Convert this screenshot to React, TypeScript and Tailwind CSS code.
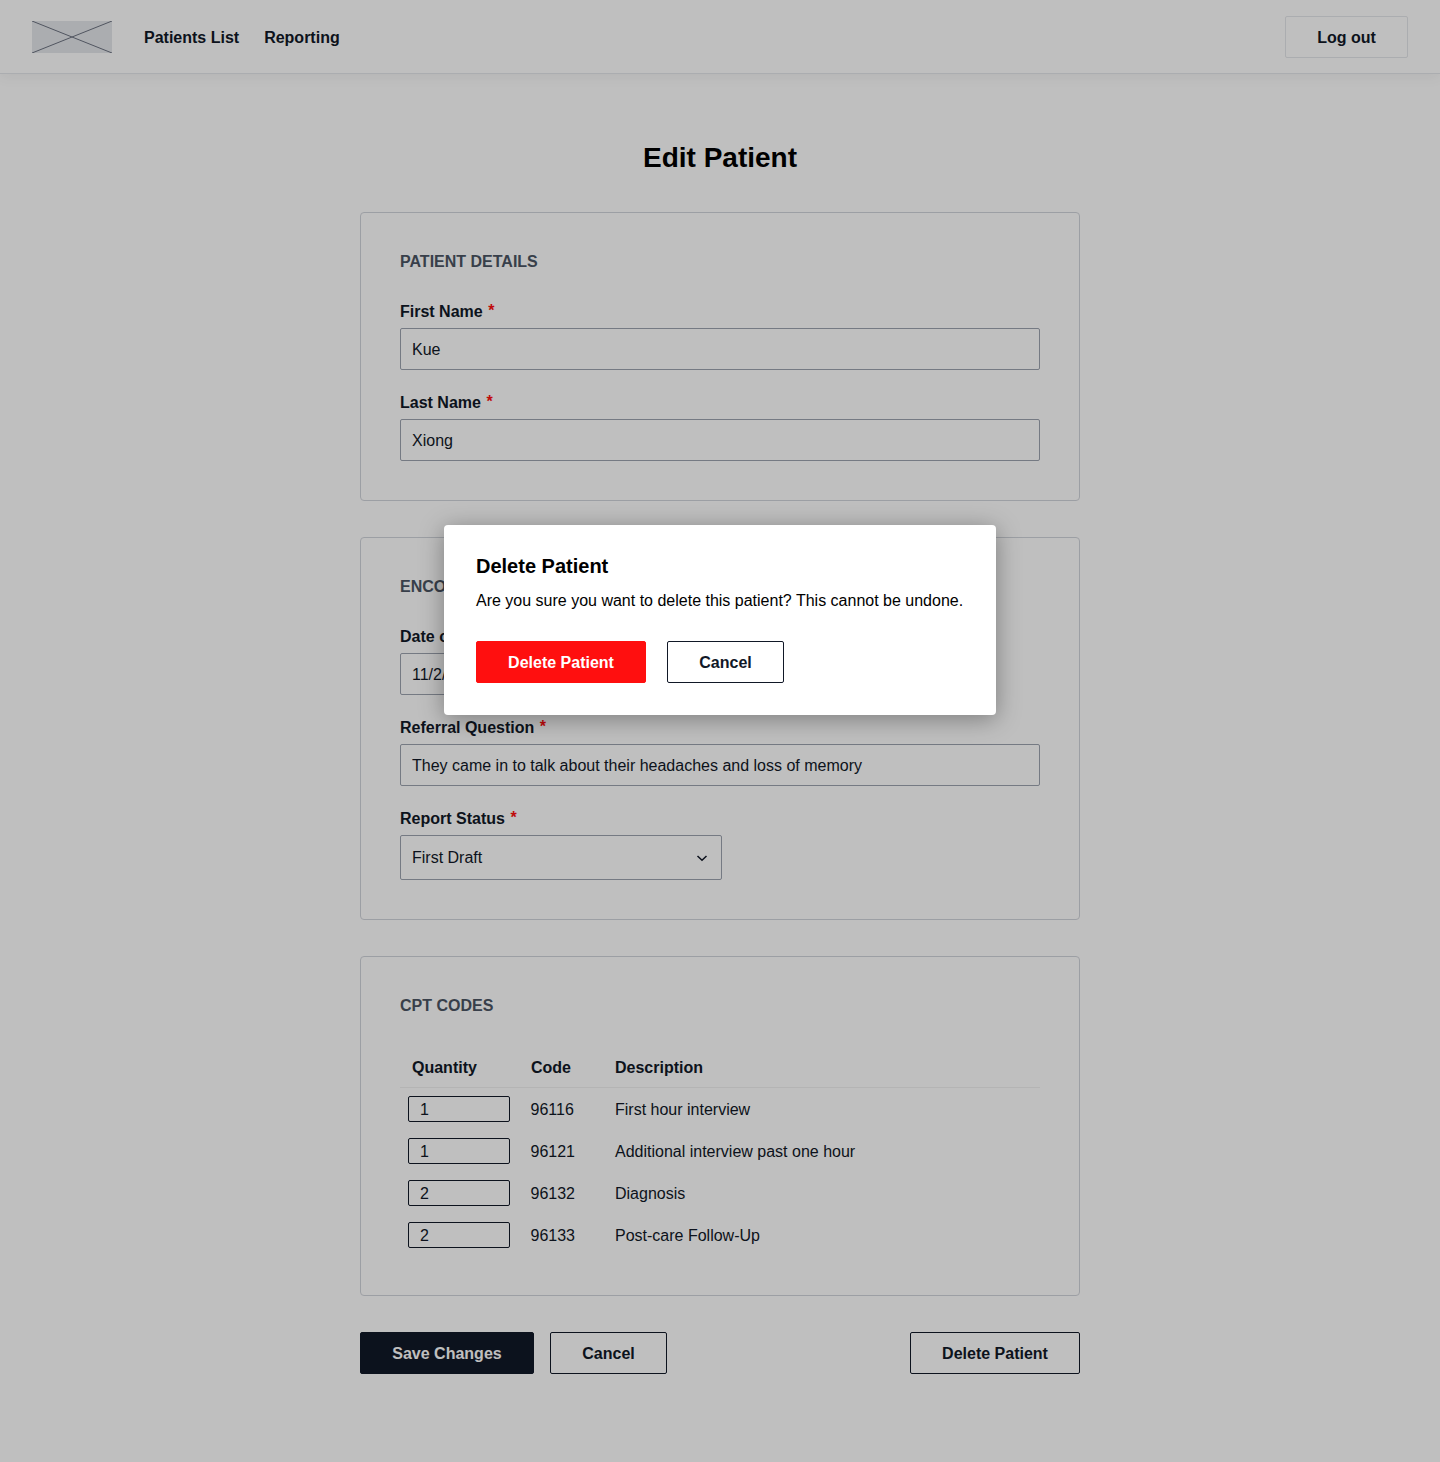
import type { ReactNode } from "react";

const codes = [
  { quantity: 1, code: "96116", description: "First hour interview" },
  { quantity: 1, code: "96121", description: "Additional interview past one hour" },
  { quantity: 2, code: "96132", description: "Diagnosis" },
  { quantity: 2, code: "96133", description: "Post-care Follow-Up" },
];

function Button({ children, className }: { children: ReactNode; className: string }) {
  return (
    <button
      type="button"
      className={`flex h-[42px] shrink-0 items-center justify-center rounded-[2px] border pt-0.5 font-bold leading-6 whitespace-nowrap ${className}`}
    >
      {children}
    </button>
  );
}

function Card({ title, children }: { title: string; children: ReactNode }) {
  return (
    <section className="rounded border border-[#d1d5db] px-[39px] pt-[37px] pb-[39px]">
      <h2 className="font-bold leading-6 text-[#4b5563] uppercase">{title}</h2>
      {children}
    </section>
  );
}

function Label({ children }: { children: ReactNode }) {
  return (
    <span className="mb-1 flex font-bold leading-6">
      {children}
      <span className="-mt-px ml-[5.5px] text-[#ff0f0f]">*</span>
    </span>
  );
}

function TextField({ label, value, width = "w-full" }: { label: string; value: string; width?: string }) {
  return (
    <label className="block">
      <Label>{label}</Label>
      <input
        readOnly
        value={value}
        className={`block h-[42px] rounded-[2px] border border-[#9ca3af] bg-white px-[11px] pt-0.5 leading-6 ${width}`}
      />
    </label>
  );
}

function SelectField({ label, value }: { label: string; value: string }) {
  return (
    <div>
      <Label>{label}</Label>
      <div className="flex h-[45px] w-[322px] items-center justify-between rounded-[2px] border border-[#9ca3af] px-[11px]">
        <span className="leading-6">{value}</span>
        <svg width="16" height="16" viewBox="0 0 16 16" fill="none" stroke="currentColor" strokeWidth="1.5">
          <path d="M3.5 6 8 10.3 12.5 6" />
        </svg>
      </div>
    </div>
  );
}

export default function App() {
  return (
    <div className="relative h-[1462px] w-full overflow-hidden bg-white font-['Liberation_Sans',Arial,sans-serif] text-base text-[#111827]">
      <header className="flex h-[74px] items-start justify-between border-b border-[#e5e7eb] px-8 pt-4 shadow-[0_4px_12px_rgba(0,0,0,0.05)]">
        <div className="flex h-[42px] items-center">
          <svg width="80" height="32" viewBox="0 0 80 32" className="mr-8">
            <rect width="80" height="32" fill="#e5e7eb" />
            <path d="M0 0 80 32M0 32 80 0" stroke="#6b7280" strokeWidth="1" />
          </svg>
          <nav className="flex gap-[25px] pt-0.5 font-bold leading-6">
            <a>Patients List</a>
            <a>Reporting</a>
          </nav>
        </div>
        <Button className="w-[123px] border-[#e5e7eb]">Log out</Button>
      </header>

      <main className="mx-auto w-[720px] pt-[66px]">
        <h1 className="text-center text-[28px] leading-9 font-bold text-black">Edit Patient</h1>

        <div className="mt-9 flex flex-col gap-9">
          <Card title="Patient Details">
            <div className="mt-[26px] flex flex-col gap-[21px] pb-0">
              <TextField label="First Name" value="Kue" />
              <TextField label="Last Name" value="Xiong" />
            </div>
          </Card>

          <Card title="Encounter Details">
            <div className="mt-[26px] flex flex-col gap-[21px]">
              <TextField label="Date of Service" value="11/2/2021" width="w-[322px]" />
              <TextField label="Referral Question" value="They came in to talk about their headaches and loss of memory" />
              <SelectField label="Report Status" value="First Draft" />
            </div>
          </Card>

          <Card title="CPT Codes">
            <div className="mt-[26px]">
              <div className="grid h-11 grid-cols-[131px_84px_1fr] border-b border-[#f0f0f1] pt-3 leading-6 font-bold">
                <span className="pl-3">Quantity</span>
                <span>Code</span>
                <span>Description</span>
              </div>
              {codes.map((row) => (
                <div key={row.code} className="grid h-[42px] grid-cols-[130.5px_84.5px_1fr] items-center">
                  <input
                    readOnly
                    value={row.quantity}
                    className="ml-2 h-[26px] w-[102px] rounded-[2px] border border-[#111827] bg-white px-[11px] pt-0.5 leading-[22px]"
                  />
                  <span className="pt-0.5">{row.code}</span>
                  <span className="pt-0.5">{row.description}</span>
                </div>
              ))}
            </div>
          </Card>
        </div>

        <div className="mt-9 flex">
          <Button className="w-[174px] border-[#111827] bg-[#111827] text-white">Save Changes</Button>
          <Button className="ml-4 w-[117px] border-[#111827]">Cancel</Button>
          <Button className="ml-auto w-[170px] border-[#111827]">Delete Patient</Button>
        </div>
      </main>

      <div className="absolute inset-0 flex items-start justify-center bg-black/25 pt-[525px]">
        <div
          role="dialog"
          className="h-[190px] w-[552px] rounded bg-white px-8 pt-[27px] shadow-[0_4px_24px_rgba(0,0,0,0.35)]"
        >
          <h2 className="text-xl leading-7 font-bold text-black">Delete Patient</h2>
          <p className="mt-[9px] leading-6 whitespace-nowrap text-black">
            Are you sure you want to delete this patient? This cannot be undone.
          </p>
          <div className="mt-7 flex gap-[21px]">
            <Button className="w-[170px] border-[#ff0f0f] bg-[#ff0f0f] text-white">Delete Patient</Button>
            <Button className="w-[117px] border-[#111827]">Cancel</Button>
          </div>
        </div>
      </div>
    </div>
  );
}
